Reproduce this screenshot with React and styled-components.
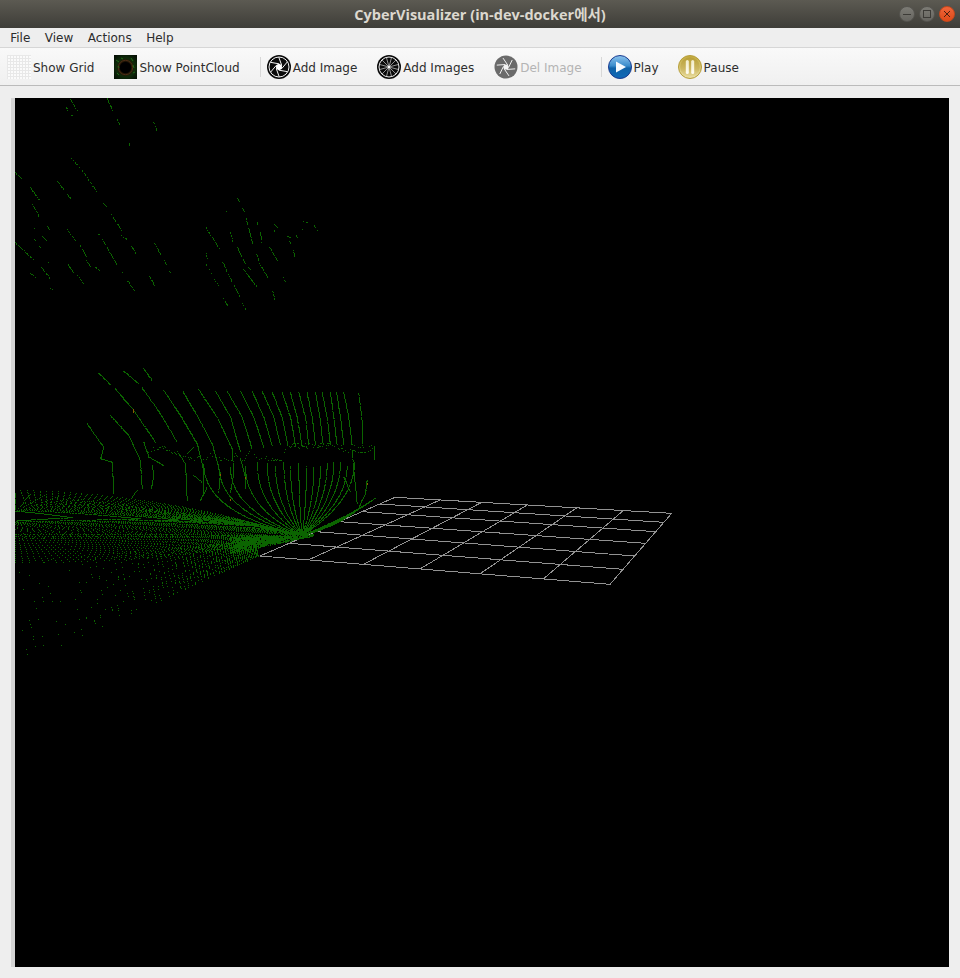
import React, { useMemo } from "react";
import styled, { createGlobalStyle } from "styled-components";

const Global = createGlobalStyle`
  html, body { margin: 0; padding: 0; height: 100%; background: #eeeeee; overflow: hidden; }
  #root { height: 100%; }
`;

const Window = styled.div`
  display: flex; flex-direction: column; height: 978px; width: 960px;
  background: #eeeeee; font-family: "DejaVu Sans", sans-serif; font-size: 12px; color: #2e2e2e;
`;
const TitleBar = styled.header`
  position: relative; height: 28px; flex: none; display: flex; align-items: center; justify-content: center;
  background: linear-gradient(#5c5a52, #3e3d38);
`;
const Title = styled.div`
  font-family: "Open Sans", "Noto Sans CJK KR", sans-serif; font-weight: 700; font-size: 14.5px; color: #dcd8cf;
  padding-bottom: 1px;
`;
const Controls = styled.div`
  position: absolute; right: 5px; top: 6px; display: flex; gap: 4px;
`;
const Control = styled.button`
  width: 16px; height: 16px; padding: 0; border-radius: 50%; display: flex; align-items: center; justify-content: center;
  border: 1px solid ${p => (p.$close ? "#c8481c" : "#55544f")};
  background: ${p => (p.$close ? "linear-gradient(#f0653a,#de4a18)" : "linear-gradient(#7c7b75,#666560)")};
`;
const MenuBar = styled.nav`
  height: 19px; flex: none; display: flex; align-items: center; padding: 0 3px; background: #eeeeee;
  border-bottom: 1px solid #d6d6d6;
`;
const MenuItem = styled.span`
  padding: 2px 7.25px 0; line-height: 19px; color: #2c2c2c;
`;
const ToolBar = styled.div`
  height: 37px; flex: none; display: flex; align-items: center; padding-left: 7px;
  background: linear-gradient(#f9f9f9, #f0f0f0); border-bottom: 1px solid #bbbbbb;
`;
const Tool = styled.div`
  display: flex; align-items: center; gap: 2px; margin-right: ${p => p.$after ?? 20}px;
  color: ${p => (p.$disabled ? "#b4b4b4" : "#2e2e2e")};
  svg { display: block; width: 24px; height: 24px; flex: none; }
`;
const ToolLabel = styled.span`
  padding-top: 2px;
`;
const Separator = styled.div`
  width: 1px; height: 20px; background: #d8d8d8; margin: 0 6px 0 0; flex: none;
`;
const Content = styled.main`
  flex: 1; min-height: 0; padding: 12px 11px 11px 11px; display: flex;
`;
const Viewport = styled.div`
  flex: 1; border-left: 4px solid #d4d4d4; background: #000; overflow: hidden;
  svg { display: block; width: 934px; height: 869px; }
`;

function rng(seed) {
  let s = seed;
  return () => {
    s = (s * 1664525 + 1013904223) >>> 0;
    return s / 4294967296;
  };
}

const TOP = [
  [210,28,232,62],[197,50,203,62],[210,70,218,78],[320,25,338,62],[350,85,358,103],[460,97,470,122],[385,157,388,167],
  [212,203,238,232],[245,240,290,305],[297,322,300,325],[310,340,318,350],[330,368,365,422],[362,435,383,450],[392,465,407,490],
  [45,247,65,265],[90,292,118,330],[172,273,190,298],[200,310,212,326],[97,343,118,382],[100,412,103,415],[142,408,150,422],[125,437,142,455],[103,448,107,452],[117,468,122,472],
  [200,418,227,452],[238,463,260,500],[258,510,270,528],[285,530,297,542],[290,423,297,435],[305,445,315,462],[320,472,350,523],[362,540,367,548],[382,572,404,602],[463,458,482,495],[487,503,500,525],[506,541,510,548],[448,558,463,587],
  [45,457,100,508],[143,515,148,518],[122,530,150,565],[200,517,220,548],[232,556,248,578],[90,550,106,560],[150,595,156,598],
  [712,325,718,335],[727,355,732,365],[678,362,683,368],[737,385,760,470],[768,490,775,510],[775,517,805,565],[617,412,660,480],[612,515,620,525],[617,488,620,503],[625,535,628,540],[633,550,645,575],[650,580,656,587],[667,515,680,545],[685,553,720,622],[670,625,682,647],[727,640,737,658],[817,603,824,632],[730,538,770,590],[745,530,752,540],[690,425,697,455],[710,470,735,520],[848,558,854,572],[770,397,773,408],[815,395,830,410],[820,418,826,428],[908,394,920,396],[942,405,950,422],[905,415,908,418],[862,438,872,442],[888,435,892,443],[868,452,872,462],[878,480,884,500],[808,470,830,510],[860,472,863,480],[780,425,784,455],
];

const ARCS = [
  [[1075,100],[1085,180],[1085,250]],[[1030,97],[1045,170],[1055,255]],[[1008,97],[1020,170],[1030,255]],
  [[990,97],[1000,170],[1010,255]],[[965,97],[980,170],[990,255]],[[945,97],[958,170],[968,255]],[[920,97],[935,170],[945,255]],
  [[895,97],[915,170],[925,255]],[[870,97],[890,170],[905,255]],[[845,97],[870,170],[885,255]],[[815,95],[845,170],[862,255]],
  [[785,92],[820,170],[840,255]],[[755,92],[790,170],[815,255]],[[720,92],[760,170],[790,260]],[[680,92],[725,170],[755,265]],
  [[645,92],[690,170],[720,275]],[[595,88],[650,170],[695,265],[700,340],[690,395]],[[547,92],[590,165],[635,250],[660,340],[655,395]],
  [[490,90],[540,165],[590,250],[610,330],[610,400]],[[425,82],[480,160],[530,245]],[[345,85],[400,150],[465,245]],
  [[295,38],[330,73]],[[370,32],[415,70]],[[430,25],[455,60]],[[260,190],[310,260],[300,295],[335,305],[340,400]],
  [[330,165],[385,225],[420,300],[425,385]],[[430,245],[445,290],[490,315]],[[455,315],[460,350],[452,385]],
  [[535,280],[555,310],[560,420]],[[580,260],[560,280]],[[580,345],[605,365]],[[720,295],[735,350],[735,385]],
  [[1030,350],[1050,395]],[[1055,270],[1060,330],[1070,430]],[[1100,360],[1095,400],[1075,440]],
  [[392,415],[410,390]],[[600,420],[620,380]],
];

const UPPER = [1062,1040,1020,1000,980,960,940,918,895,870,850,825,800,770,735,690,655,610];
const TIPS = [215,420,535,605,660,705,735,765,790,810,830,845,858,870,880,888];

function buildCloud() {
  const green = new Set();
  const r = rng(12345);
  const put = (zx, zy) => {
    const x = Math.round(zx), y = Math.round(zy);
    if (x < 15 || x > 948) return;
    green.add(x + "," + y);
  };
  const z4 = (x, y) => put(x / 3, 360 + y / 3);
  const line = (pts, density, jitter = 0) => {
    for (let i = 0; i < pts.length - 1; i++) {
      const [a, b] = pts[i], [c, d] = pts[i + 1];
      const n = Math.max(2, Math.hypot(c - a, d - b));
      for (let t = 0; t <= n; t += 2.2) {
        if (r() < density) {
          z4(a + ((c - a) * t) / n + (r() - 0.5) * jitter, b + ((d - b) * t) / n + (r() - 0.5) * jitter);
        }
      }
    }
  };
  // quadratic curve whose dot spacing runs from stepA at p0 to stepB at p2
  const bez = (p0, p1, p2, stepA, stepB = stepA, density = 0.97) => {
    const n = Math.hypot(p2[0] - p0[0], p2[1] - p0[1]);
    let d = 0;
    while (d <= n) {
      const t = d / n, u = 1 - t;
      if (r() < density) z4(u * u * p0[0] + 2 * u * t * p1[0] + t * t * p2[0], u * u * p0[1] + 2 * u * t * p1[1] + t * t * p2[1]);
      d += stepA + (stepB - stepA) * t;
    }
  };

  TOP.forEach(([a, b, c, d]) => {
    const n = Math.max(1, Math.hypot(c - a, d - b) / 3);
    for (let i = 0; i <= n; i++) {
      if (r() < 0.72) put((a + ((c - a) * i) / n) / 3, 90 + (b + ((d - b) * i) / n) / 3);
    }
  });

  ARCS.forEach(a => line(a, 0.98, 0.8));
  UPPER.forEach(x => {
    const hub = [905, 525];
    const y0 = 305 + r() * 16;
    const ctrlY = x > 905 ? 425 : 425 + (905 - x) * 0.11;
    bez([x, y0], [x, ctrlY], hub, 2.2);
  });
  let walk = 262;
  for (let x = 435; x < 1125; x += 3) {
    walk += (r() - 0.5) * 18;
    walk = Math.max(x > 850 ? 248 : 238, Math.min(x > 850 ? 276 : 300, walk));
    if (r() < 0.55) z4(x, walk);
    if (x > 860 && r() < 0.3) z4(x, 254 + r() * 10);
  }
  for (let y = 258; y < 298; y += 3) z4(1122, y);

  // rings that reach a tip and return to the left
  TIPS.forEach((tx, i) => {
    const ty = 472 + i * 3.4;
    const upY = 452 - i * 3.6;
    const loY = 482 + i * 3.6;
    bez([45, upY], [tx * 0.6, upY + (ty - upY) * 0.35], [tx, ty], 3 + i * 2.4, 3);
    bez([tx, ty], [tx * 0.55, ty + 4], [45, loY], 3, 3 + i * 2);
  });
  // outer rings above the tips, dotted far from the hub
  for (let i = 0; i < 10; i++) {
    const y0 = 390 + i * 5;
    bez([60 + i * 2, y0], [480 + i * 8, y0 + 8], [880, 522], 20 - i * 0.8, 3.4);
  }
  // near rings below the hub
  for (let i = 0; i < 14; i++) {
    const y0 = 522 + i * 6.5;
    bez([45, y0], [400, y0 - 4 + i * 0.5], [880 - i * 4, 528 + i * 1.4], 11 + i, 3.2);
  }
  // lattice of the distant floor
  const hx = 905, hy = 528;
  for (let a = 0; a < 40; a++) {
    const t = a / 39;
    const ex = 20 + t * 60, ey = 610 + t * 290;
    let f = 0.16;
    while (f <= 1.06) {
      const x = hx + (ex - hx) * f, y = hy + (ey - hy) * f;
      const keep = Math.max(0.14, 0.85 - f * 0.85 - t * 0.15);
      if (r() < keep) z4(x, y);
      f *= 1.032;
    }
  }
  // solid mass beside the hub
  for (let i = 0; i < 1100; i++) {
    const t = Math.pow(r(), 0.85);
    const x = 940 - t * 250;
    const half = 3 + t * 22;
    const y = 525 + t * 30 + (r() - 0.5) * half * 2;
    z4(x, y);
  }
  for (let i = 0; i < 8; i++) {
    bez([905, 525], [985 + i * 8, 505 - i * 5], [1040 + i * 12, 470 - i * 8], 2.4);
  }

  return [...green].map(k => {
    const [x, y] = k.split(",").map(Number);
    return `M${x - 15} ${y - 98}h1v1h-1z`;
  }).join("");
}

const RIGHT_Y = [100, 127, 155, 190, 228, 268, 313];
const LEFT_Y = [52, 72, 95, 125, 155, 190, 228];
const TOP_X = [465, 600, 725, 862, 1010, 1150, 1295];
const BOT_X = [60, 205, 370, 540, 720, 910, 1110];

const zp = (x, y) => `${x / 3 + 240 - 15},${y / 3 + 480 - 98}`;

function buildGrid() {
  const d = [];
  RIGHT_Y.forEach((ry, i) => {
    const rx = 1295 - (ry - 100) * 0.8685;
    const ly = LEFT_Y[i];
    const lx = 465 - (ly - 52) * 2.30;
    d.push(`M${zp(lx, ly)}L${zp(rx, ry)}`);
  });
  TOP_X.forEach((tx, i) => {
    const ty = 52 + ((tx - 465) / 830) * 48;
    const bx = BOT_X[i];
    const by = 228 + ((bx - 60) / 1050) * 85;
    d.push(`M${zp(tx, ty)}L${zp(bx, by)}`);
  });
  return d.join("");
}

function Scene() {
  const cloud = useMemo(buildCloud, []);
  const grid = useMemo(buildGrid, []);
  const orange = [[398, 148], [400, 152], [1100, 370], [735, 350], [660, 342], [690, 416]]
    .map(([x, y]) => `M${Math.round(x / 3) - 15} ${Math.round(360 + y / 3) - 98}h1v2h-1z`).join("");
  return (
    <svg viewBox="0 0 934 869" shapeRendering="crispEdges">
      <path d={grid} stroke="#929292" strokeWidth="1" fill="none" />
      <path d={cloud} fill="#0b6400" />
      <path d={orange} fill="#8a5a00" />
    </svg>
  );
}

const spokes = (n, r1, r2, rot = 0) =>
  Array.from({ length: n }, (_, i) => {
    const a = rot + (i * 2 * Math.PI) / n;
    return [12 + r1 * Math.cos(a), 12 + r1 * Math.sin(a), 12 + r2 * Math.cos(a), 12 + r2 * Math.sin(a)];
  });

const blades = (rot, outer = 9.8, inner = 3.2) =>
  Array.from({ length: 6 }, (_, i) => {
    const a = rot + (i * Math.PI) / 3;
    const b = a + Math.PI / 3;
    return [12 + outer * Math.cos(a), 12 + outer * Math.sin(a), 12 + inner * Math.cos(b), 12 + inner * Math.sin(b)];
  });

const GridIcon = () => (
  <svg viewBox="0 0 24 24">
    <rect width="24" height="24" fill="#fbfbfb" />
    <path
      d="M0 .5H24M0 3.5H24M0 6.5H24M0 9.5H24M0 12.5H24M0 15.5H24M0 18.5H24M0 21.5H24M.5 0V24M3.5 0V24M6.5 0V24M9.5 0V24M12.5 0V24M15.5 0V24M18.5 0V24M21.5 0V24"
      stroke="#e8e8e8" strokeWidth="1" fill="none"
    />
  </svg>
);

const CloudIconSvg = styled.svg`
  && { width: 23px; }
`;

const CloudIcon = () => (
  <CloudIconSvg viewBox="0 0 23 24">
    <defs>
      <radialGradient id="pc" cx="50%" cy="52%" r="65%">
        <stop offset="28%" stopColor="#000" />
        <stop offset="42%" stopColor="#241806" />
        <stop offset="62%" stopColor="#0e2a0a" />
        <stop offset="100%" stopColor="#050f04" />
      </radialGradient>
    </defs>
    <rect width="23" height="24" fill="url(#pc)" />
    <circle cx="11.5" cy="12.5" r="7.2" fill="none" stroke="#4a2a14" strokeWidth="1" />
    <circle cx="11.5" cy="12.5" r="5.6" fill="#000" />
    <path d="M2 5l3 2M17 3l2 3M3 18l2 2M19 18l2-1M4 11l1 2M7 3l2 1M19 10l1 3" stroke="#1f6a18" strokeWidth="1" />
  </CloudIconSvg>
);

const ApertureIcon = () => (
  <svg viewBox="0 0 24 24">
    <circle cx="12" cy="12" r="12" fill="#0a0a0a" />
    <circle cx="12" cy="12" r="10" fill="none" stroke="#f4f4f4" strokeWidth="1" />
    <polygon points={spokes(6, 3.4, 3.4, 0.5).map(s => `${s[0]},${s[1]}`).join(" ")} fill="#ffffff" />
    {blades(0.5).map((b, i) => (
      <line key={i} x1={b[0]} y1={b[1]} x2={b[2]} y2={b[3]} stroke="#f4f4f4" strokeWidth="1" />
    ))}
  </svg>
);

const WheelIcon = () => (
  <svg viewBox="0 0 24 24">
    <circle cx="12" cy="12" r="12" fill="#0a0a0a" />
    <circle cx="12" cy="12" r="10" fill="none" stroke="#f0f0f0" strokeWidth="1" />
    {spokes(12, 1, 10, 0.26).map((s, i) => (
      <line key={i} x1={s[0]} y1={s[1]} x2={s[2]} y2={s[3]} stroke="#cfcfcf" strokeWidth="0.7" />
    ))}
    <circle cx="12" cy="12" r="1.2" fill="#fff" />
  </svg>
);

const DelIcon = () => (
  <svg viewBox="0 0 24 24">
    <circle cx="12" cy="12" r="11.5" fill="#6a6a6a" />
    <circle cx="12" cy="12" r="2.6" fill="#f4f4f4" />
    {blades(0.2, 9.4, 2.6).map((b, i) => (
      <line key={i} x1={b[0]} y1={b[1]} x2={b[2]} y2={b[3]} stroke="#f0f0f0" strokeWidth="1" />
    ))}
  </svg>
);

const PlayIcon = () => (
  <svg viewBox="0 0 24 24">
    <defs>
      <linearGradient id="pb" x1="0" y1="0" x2="0" y2="1">
        <stop offset="0%" stopColor="#8cc4ee" />
        <stop offset="45%" stopColor="#3a8ccc" />
        <stop offset="55%" stopColor="#0f62a8" />
        <stop offset="100%" stopColor="#0f6ab8" />
      </linearGradient>
    </defs>
    <circle cx="12" cy="12" r="11.5" fill="url(#pb)" stroke="#1c3c90" strokeWidth="1" />
    <path d="M8 6.5L18 12L8 17.5Z" fill="#f6fbff" />
  </svg>
);

const PauseIcon = () => (
  <svg viewBox="0 0 24 24">
    <defs>
      <linearGradient id="gr" x1="0" y1="0" x2="0" y2="1">
        <stop offset="0%" stopColor="#c2a93c" />
        <stop offset="100%" stopColor="#ece2a8" />
      </linearGradient>
      <linearGradient id="gf" x1="0" y1="0" x2="0" y2="1">
        <stop offset="0%" stopColor="#b89f38" />
        <stop offset="60%" stopColor="#cdb862" />
        <stop offset="100%" stopColor="#e6d99a" />
      </linearGradient>
      <linearGradient id="gb" x1="0" y1="0" x2="0" y2="1">
        <stop offset="0%" stopColor="#f2ecc8" />
        <stop offset="100%" stopColor="#fffdf2" />
      </linearGradient>
    </defs>
    <circle cx="12" cy="12" r="11.5" fill="url(#gr)" stroke="#b69e3c" strokeWidth="1" />
    <circle cx="12" cy="12" r="9.8" fill="url(#gf)" />
    <rect x="7.8" y="5" width="3" height="14" rx="1.5" fill="url(#gb)" />
    <rect x="13.2" y="5" width="3" height="14" rx="1.5" fill="url(#gb)" />
  </svg>
);

export default function App() {
  return (
    <Window>
      <Global />
      <TitleBar>
        <Title>CyberVisualizer (in-dev-docker에서)</Title>
        <Controls>
          <Control aria-label="minimize">
            <svg width="10" height="10" viewBox="0 0 10 10"><path d="M1 5.5H9" stroke="#3c3b37" strokeWidth="1" /></svg>
          </Control>
          <Control aria-label="maximize">
            <svg width="10" height="10" viewBox="0 0 10 10"><rect x="1.5" y="1.5" width="7" height="7" fill="none" stroke="#3c3b37" /></svg>
          </Control>
          <Control $close aria-label="close">
            <svg width="10" height="10" viewBox="0 0 10 10"><path d="M2 2L8 8M8 2L2 8" stroke="#4a2010" strokeWidth="1" /></svg>
          </Control>
        </Controls>
      </TitleBar>
      <MenuBar>
        <MenuItem>File</MenuItem>
        <MenuItem>View</MenuItem>
        <MenuItem>Actions</MenuItem>
        <MenuItem>Help</MenuItem>
      </MenuBar>
      <ToolBar>
        <Tool><GridIcon /><ToolLabel>Show Grid</ToolLabel></Tool>
        <Tool><CloudIcon /><ToolLabel>Show PointCloud</ToolLabel></Tool>
        <Separator />
        <Tool><ApertureIcon /><ToolLabel>Add Image</ToolLabel></Tool>
        <Tool><WheelIcon /><ToolLabel>Add Images</ToolLabel></Tool>
        <Tool $disabled $after={19}><DelIcon /><ToolLabel>Del Image</ToolLabel></Tool>
        <Separator />
        <Tool $after={19}><PlayIcon /><ToolLabel>Play</ToolLabel></Tool>
        <Tool><PauseIcon /><ToolLabel>Pause</ToolLabel></Tool>
      </ToolBar>
      <Content>
        <Viewport><Scene /></Viewport>
      </Content>
    </Window>
  );
}
